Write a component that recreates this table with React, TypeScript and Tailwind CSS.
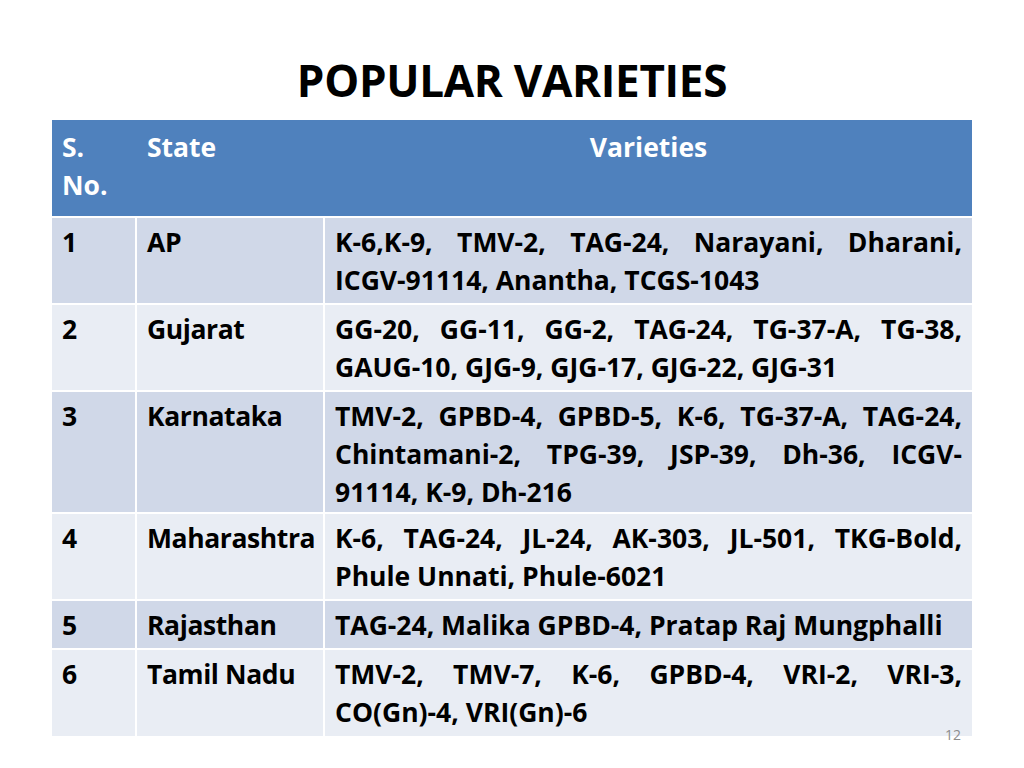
import React from "react";

type Row = { no: string; state: string; lines: string[]; h: number; bg: string };

const rows: Row[] = [
  { no: "1", state: "AP", lines: ["K-6,K-9, TMV-2, TAG-24, Narayani, Dharani,", "ICGV-91114, Anantha, TCGS-1043"], h: 85, bg: "bg-[#d0d8e8]" },
  { no: "2", state: "Gujarat", lines: ["GG-20, GG-11, GG-2, TAG-24, TG-37-A, TG-38,", "GAUG-10, GJG-9, GJG-17, GJG-22, GJG-31"], h: 85, bg: "bg-[#e9edf4]" },
  { no: "3", state: "Karnataka", lines: ["TMV-2, GPBD-4, GPBD-5, K-6, TG-37-A, TAG-24,", "Chintamani-2, TPG-39, JSP-39, Dh-36, ICGV-", "91114, K-9, Dh-216"], h: 120, bg: "bg-[#d0d8e8]" },
  { no: "4", state: "Maharashtra", lines: ["K-6, TAG-24, JL-24, AK-303, JL-501, TKG-Bold,", "Phule Unnati, Phule-6021"], h: 85, bg: "bg-[#e9edf4]" },
  { no: "5", state: "Rajasthan", lines: ["TAG-24, Malika GPBD-4, Pratap Raj Mungphalli"], h: 47, bg: "bg-[#d0d8e8]" },
  { no: "6", state: "Tamil Nadu", lines: ["TMV-2, TMV-7, K-6, GPBD-4, VRI-2, VRI-3,", "CO(Gn)-4, VRI(Gn)-6"], h: 86, bg: "bg-[#e9edf4]" },
];

export default function App() {
  return (
    <div className="w-[1024px] h-[768px] bg-white relative overflow-hidden text-black font-['Open_Sans','Liberation_Sans',sans-serif] font-bold [font-variant-ligatures:none]">
      <div className="h-[120px] flex items-start justify-center pt-[52px]">
        <h1 className="text-[44px] leading-[56px] font-bold tracking-[-0.3px]">POPULAR VARIETIES</h1>
      </div>
      <div className="ml-[52px] w-[920px] flex flex-col gap-[2px] text-[26.5px] leading-[38px]">
        <div className="flex gap-[2px] h-[96px] bg-[#4f81bd] text-white">
          <div className="w-[83px] bg-[#4f81bd] pl-[10px] pt-[8px]">
            <div>S.</div>
            <div>No.</div>
          </div>
          <div className="w-[186px] bg-[#4f81bd] pl-[10px] pt-[8px]">State</div>
          <div className="flex-1 bg-[#4f81bd] pt-[8px] text-center">Varieties</div>
        </div>
        {rows.map((r) => (
          <div key={r.no} className="flex gap-[2px]" style={{ height: r.h }}>
            <div className={`w-[83px] pl-[10px] pt-[5px] ${r.bg}`}>{r.no}</div>
            <div className={`w-[186px] pl-[10px] pt-[5px] whitespace-nowrap tracking-[-0.4px] ${r.bg}`}>{r.state}</div>
            <div className={`flex-1 px-[10px] pt-[5px] ${r.bg}`}>
              {r.lines.map((l, i) => (
                <div
                  key={i}
                  className={
                    i < r.lines.length - 1
                      ? "text-justify [text-align-last:justify] whitespace-nowrap"
                      : "whitespace-nowrap"
                  }
                >
                  {l}
                </div>
              ))}
            </div>
          </div>
        ))}
      </div>
      <div className="absolute left-[945px] top-[724px] text-[14px] font-normal text-[#8c8c8c]">12</div>
    </div>
  );
}
